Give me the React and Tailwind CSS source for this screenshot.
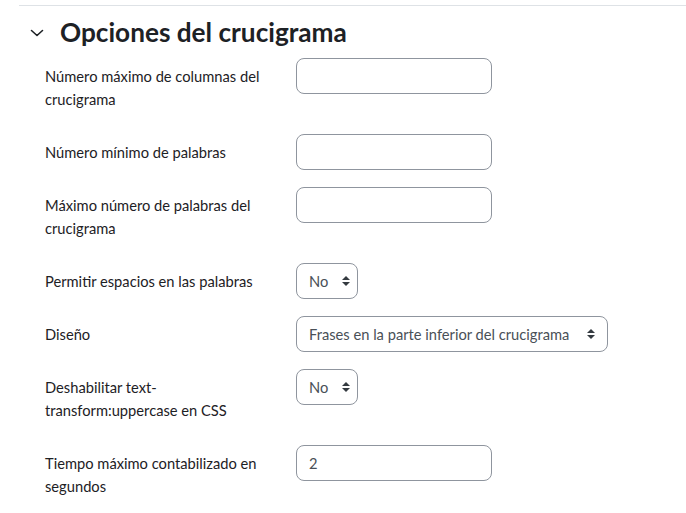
const labelCls = 'pt-[7px] pb-[7px] pr-[15px] text-[14.7px] leading-[23px] text-[#1d2125]';
const inputCls = 'h-9 rounded-lg border border-[#8f959e] bg-white px-3 text-[14.7px] text-[#495057] whitespace-nowrap';

const Arrows = () => (
  <svg width="8" height="10" viewBox="0 0 4 5" className="shrink-0">
    <path d="M2 0L0 2h4zm0 5L0 3h4z" fill="#343a40" />
  </svg>
);

const TextField = ({ value = '' }) => (
  <div className={`${inputCls} w-[196px] flex items-center`}>{value}</div>
);

const SelectField = ({ value, wide }) => (
  <div className={`${inputCls} flex items-center gap-[14px] pr-3 ${wide ? 'w-[312px] justify-between' : 'w-[62px]'}`}>
    <span>{value}</span>
    <Arrows />
  </div>
);

const Row = ({ label, children }) => (
  <div className="grid grid-cols-[251px_1fr] mb-4">
    <div className={labelCls}>{label}</div>
    <div>{children}</div>
  </div>
);

export default function App() {
  return (
    <div className="min-h-screen bg-white" style={{ fontFamily: 'Lato, "Noto Sans", sans-serif' }}>
      <div className="pt-[5px] pl-[19px]">
        <div className="h-px bg-[#dee2e6]" />
      </div>
      <div className="flex items-center pl-[30px] pt-[11px] pb-[10px]">
        <svg width="14" height="8" viewBox="0 0 14 8" className="mr-[16px]">
          <path d="M1.5 1.5L7 6.5L12.5 1.5" fill="none" stroke="#1d2125" strokeWidth="1.6" strokeLinecap="round" strokeLinejoin="round" />
        </svg>
        <h3 className="text-[26.2px] leading-[31px] font-bold text-[#1d2125]">Opciones del crucigrama</h3>
      </div>
      <div className="pl-[45px]">
        <Row label="Número máximo de columnas del crucigrama">
          <TextField />
        </Row>
        <Row label="Número mínimo de palabras">
          <TextField />
        </Row>
        <Row label="Máximo número de palabras del crucigrama">
          <TextField />
        </Row>
        <Row label="Permitir espacios en las palabras">
          <SelectField value="No" />
        </Row>
        <Row label="Diseño">
          <SelectField value="Frases en la parte inferior del crucigrama" wide />
        </Row>
        <Row label="Deshabilitar text-transform:uppercase en CSS">
          <SelectField value="No" />
        </Row>
        <Row label="Tiempo máximo contabilizado en segundos">
          <TextField value="2" />
        </Row>
      </div>
    </div>
  );
}
